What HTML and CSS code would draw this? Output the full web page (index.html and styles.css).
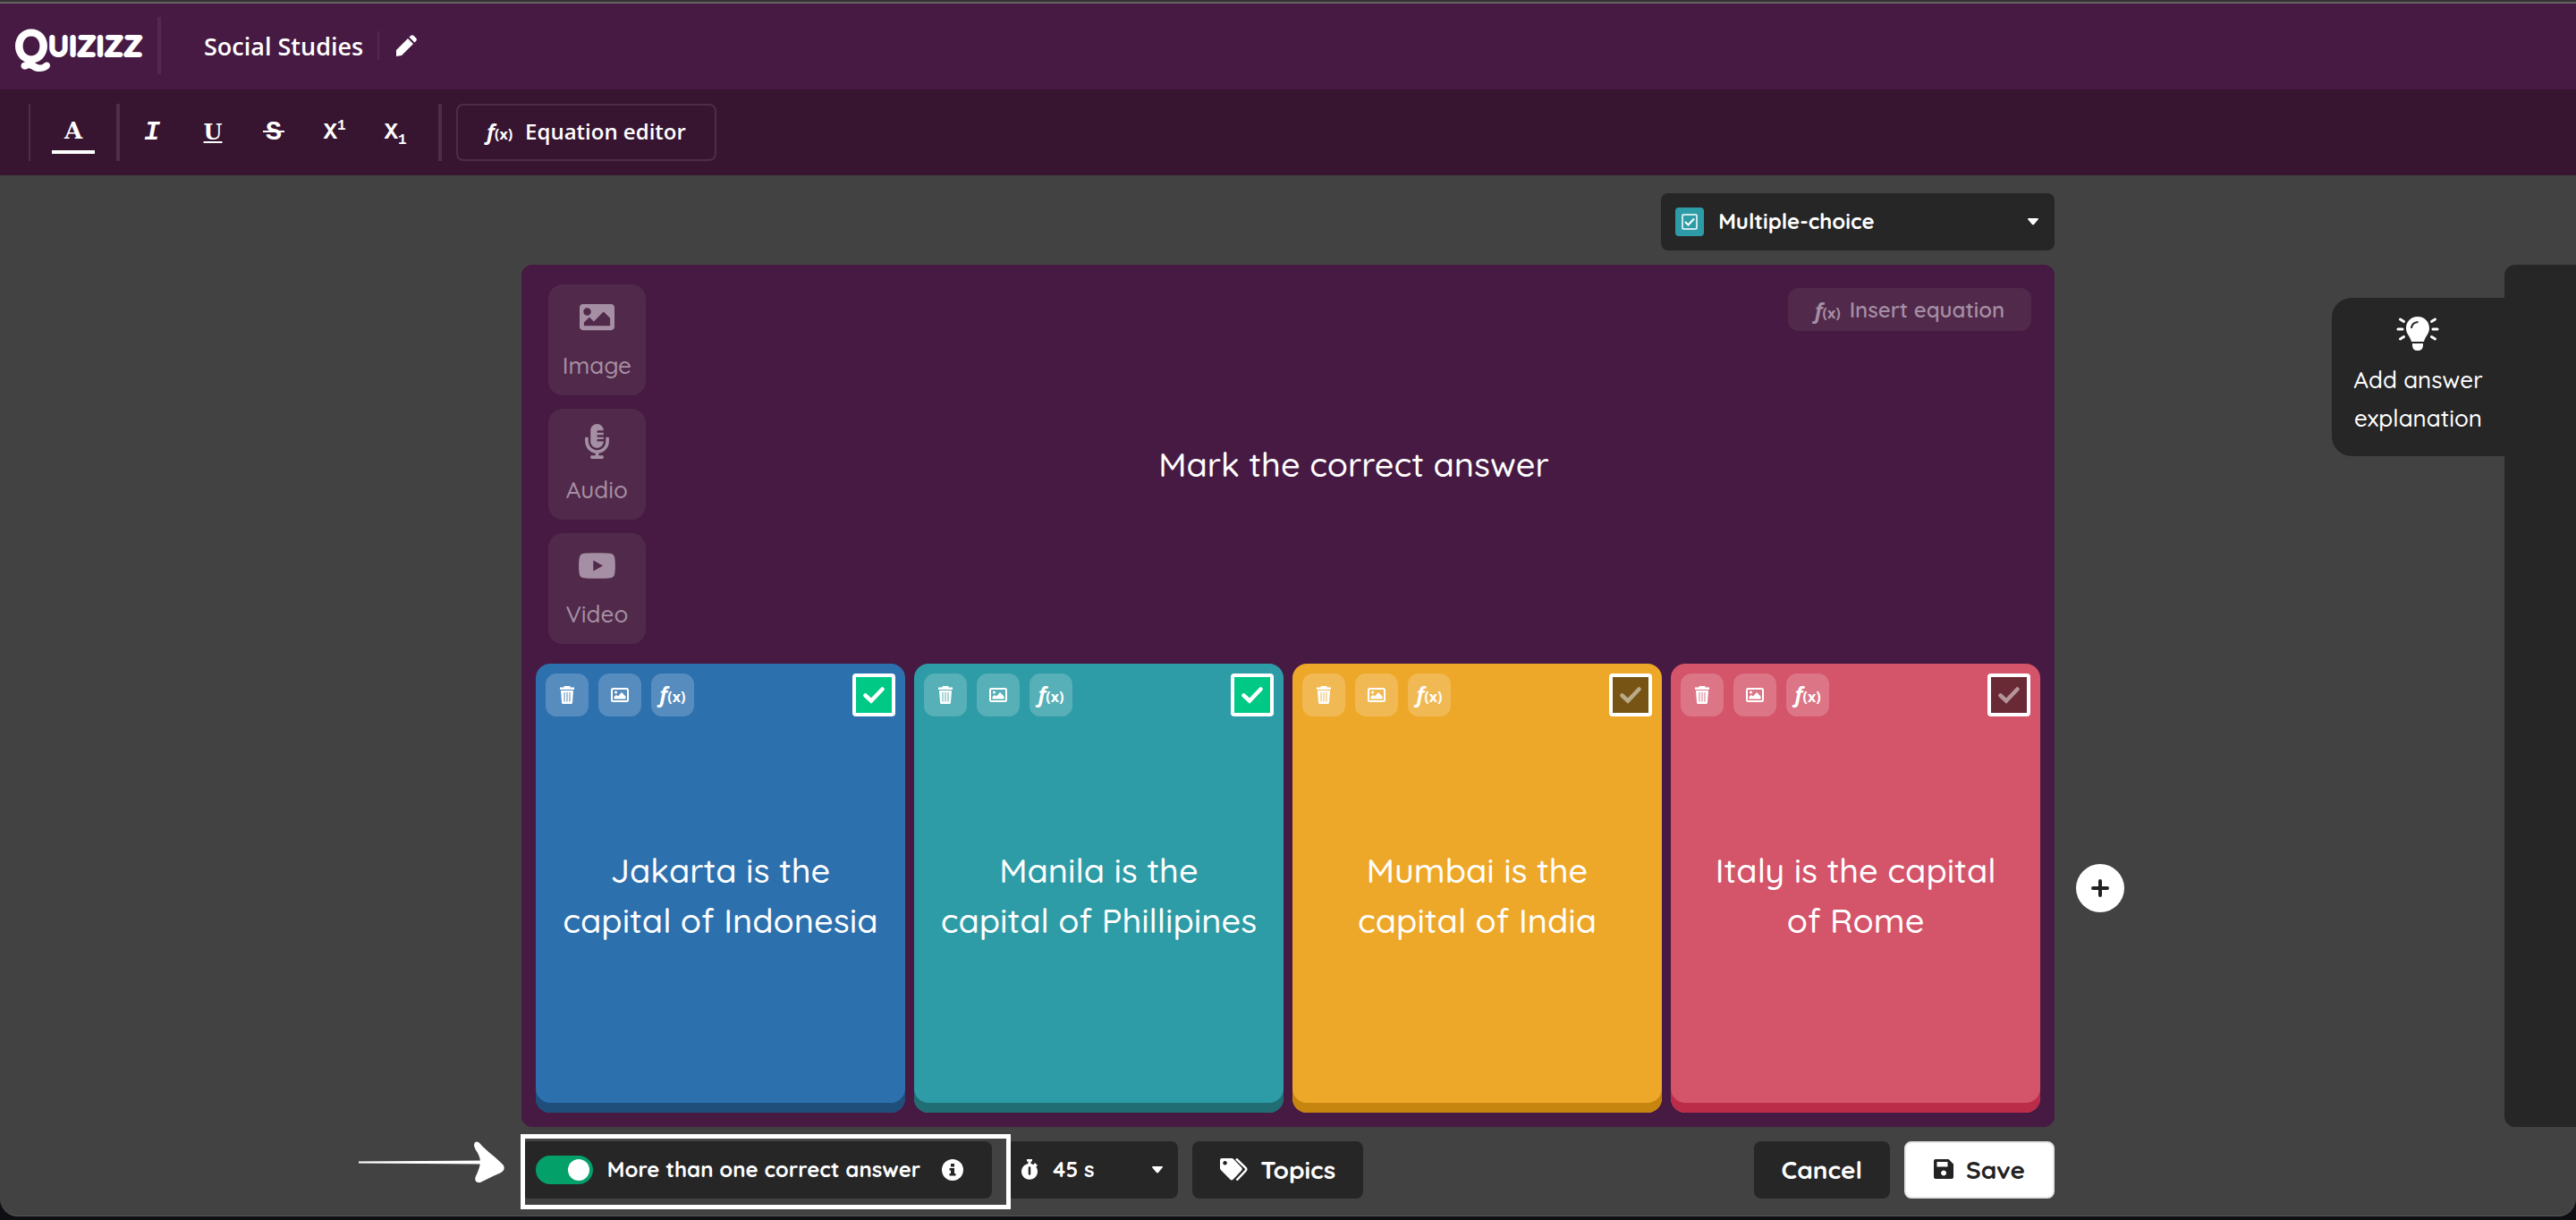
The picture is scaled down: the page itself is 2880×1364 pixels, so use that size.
FILE: index.html
```
<!DOCTYPE html>
<html lang="en">
<head>
    <meta charset="UTF-8">
    <meta name="viewport" content="width=device-width, initial-scale=1.0">
    <title>Quizizz - Question Editor</title>
    <link rel="stylesheet" href="styles.css">
</head>
<body>

    <!-- Shared icons -->
    <svg class="sprite" aria-hidden="true">
        <symbol id="trash" viewBox="0 0 16 20">
            <path fill="currentColor" d="M5 0h6l1 1.500h4v2.500H0V1.500h4zM1 5h14l-1 13.500q-.2 1.500-1.500 1.500h-9Q2.200 20 2 18.500zM4.500 7v10.500h1V7zM7.500 7v10.500h1V7zM10.500 7v10.500h1V7z" fill-rule="evenodd"/>
        </symbol>
        <symbol id="picture" viewBox="0 0 20 16">
            <rect x="1" y="1" width="18" height="14" rx="1.500" fill="none" stroke="currentColor" stroke-width="2"/>
            <circle cx="5.500" cy="5" r="1.500" fill="currentColor"/>
            <path fill="currentColor" d="M3.500 12.500V10L6 8l2 1.500 4-4.500 4.500 4.500v3z"/>
        </symbol>
        <symbol id="check" viewBox="0 0 24 20">
            <path d="M2.500 10.500L9 16.500 21.500 3.500" fill="none" stroke="currentColor" stroke-width="4.500" stroke-linecap="round"/>
        </symbol>
        <symbol id="caret" viewBox="0 0 12 8">
            <path fill="currentColor" d="M1 0h10q1.500.2.600 1.500L7 7q-1 .8-2 0L.4 1.500Q-.5.200 1 0z"/>
        </symbol>
    </svg>

    <!-- Header -->
    <header class="header">
        <a href="#" class="logo" aria-label="Quizizz"><span class="logo-q">Q</span>UIZIZZ</a>
        <span class="divider thick"></span>
        <h1 class="quiz-name">Social Studies</h1>
        <span class="divider short"></span>
        <button class="edit-name" aria-label="Edit name">
            <svg width="24" height="24" viewBox="0 0 24 24">
                <path fill="currentColor" d="M14 4l6 6L7 23l-6 1 0-7zM15.500 2.500l1.800-1.800q1.700-1.200 3.300.2l2.500 2.500q1.400 1.600.2 3.300L21.500 8.500z"/>
            </svg>
        </button>
    </header>

    <!-- Formatting toolbar -->
    <div class="toolbar">
        <span class="divider"></span>
        <button class="tool color" aria-label="Text colour">A</button>
        <span class="divider thick"></span>
        <div class="tools">
            <button class="tool italic" aria-label="Italic">I</button>
            <button class="tool underline" aria-label="Underline">U</button>
            <button class="tool strike" aria-label="Strikethrough">S</button>
            <button class="tool script" aria-label="Superscript">X<sup>1</sup></button>
            <button class="tool script" aria-label="Subscript">X<sub>1</sub></button>
        </div>
        <span class="divider thick"></span>
        <button class="equation-editor"><span class="fx">f<small>(x)</small></span>Equation editor</button>
    </div>

    <main class="workspace">
        <label class="type-picker">
            <span class="type-icon">
                <svg width="18" height="18" viewBox="0 0 18 18" fill="none" stroke="currentColor">
                    <rect x="1" y="1" width="16" height="16" rx="1" stroke-width="1.500"/>
                    <path d="M4 9l3.500 3.500L14 5.500" stroke-width="2"/>
                </svg>
            </span>
            <select aria-label="Question type"><option>Multiple-choice</option></select>
            <svg class="caret"><use href="#caret"/></svg>
        </label>

        <section class="stage">
            <div class="question">
                <div class="media">
                    <button class="media-btn">
                        <svg width="39" height="39" viewBox="0 0 512 512"><path fill="currentColor" d="M464 448H48c-26.510 0-48-21.490-48-48V112c0-26.510 21.490-48 48-48h416c26.510 0 48 21.490 48 48v288c0 26.510-21.490 48-48 48zM112 120c-30.928 0-56 25.072-56 56s25.072 56 56 56 56-25.072 56-56-25.072-56-56-56zM64 384h384V272l-87.515-87.515c-4.686-4.686-12.284-4.686-16.971 0L208 320l-55.515-55.515c-4.686-4.686-12.284-4.686-16.971 0L64 336v48z"/></svg>
                        Image
                    </button>
                    <button class="media-btn">
                        <svg width="27" height="39" viewBox="0 0 352 512"><path fill="currentColor" d="M336 192h-16c-8.840 0-16 7.160-16 16v48c0 74.800-64.490 134.820-140.790 127.380C96.710 376.890 48 317.110 48 250.300V208c0-8.840-7.160-16-16-16H16c-8.840 0-16 7.160-16 16v40.160c0 89.640 63.970 169.550 152 181.690V464H96c-8.840 0-16 7.160-16 16v16c0 8.840 7.160 16 16 16h160c8.840 0 16-7.160 16-16v-16c0-8.840-7.160-16-16-16h-56v-33.770C285.710 418.470 352 344.900 352 256v-48c0-8.840-7.160-16-16-16zM176 352c53.020 0 96-42.980 96-96h-85.330c-5.890 0-10.670-3.580-10.670-8v-16c0-4.420 4.780-8 10.670-8H272v-32h-85.330c-5.890 0-10.670-3.580-10.670-8v-16c0-4.420 4.780-8 10.670-8H272v-32h-85.330c-5.890 0-10.670-3.580-10.670-8v-16c0-4.420 4.780-8 10.670-8H272c0-53.020-42.980-96-96-96S80 42.980 80 96v160c0 53.020 42.980 96 96 96z"/></svg>
                        Audio
                    </button>
                    <button class="media-btn">
                        <svg width="43" height="39" viewBox="0 0 576 512"><path fill="currentColor" d="M549.655 124.083c-6.281-23.650-24.787-42.276-48.284-48.597C458.781 64 288 64 288 64S117.220 64 74.629 75.486c-23.497 6.322-42.003 24.947-48.284 48.597-11.412 42.867-11.412 132.305-11.412 132.305s0 89.438 11.412 132.305c6.281 23.650 24.787 41.500 48.284 47.821C117.220 448 288 448 288 448s170.780 0 213.371-11.486c23.497-6.321 42.003-24.171 48.284-47.821 11.412-42.867 11.412-132.305 11.412-132.305s0-89.438-11.412-132.305zm-317.510 213.508V175.185l142.739 81.205-142.739 81.201z"/></svg>
                        Video
                    </button>
                </div>
                <p class="question-text">Mark the correct answer</p>
                <button class="insert-equation"><span class="fx">f<small>(x)</small></span>Insert equation</button>
            </div>

            <div class="answers">
                <article class="answer blue">
                    <div class="answer-tools">
                        <button aria-label="Delete"><svg width="16" height="20"><use href="#trash"/></svg></button>
                        <button aria-label="Add image"><svg width="20" height="16"><use href="#picture"/></svg></button>
                        <button aria-label="Add equation"><span class="fx">f<small>(x)</small></span></button>
                        <label class="correct"><input type="checkbox" aria-label="Correct answer" checked><svg width="24" height="20"><use href="#check"/></svg></label>
                    </div>
                    <p>Jakarta is the<br>capital of Indonesia</p>
                </article>
                <article class="answer teal">
                    <div class="answer-tools">
                        <button aria-label="Delete"><svg width="16" height="20"><use href="#trash"/></svg></button>
                        <button aria-label="Add image"><svg width="20" height="16"><use href="#picture"/></svg></button>
                        <button aria-label="Add equation"><span class="fx">f<small>(x)</small></span></button>
                        <label class="correct"><input type="checkbox" aria-label="Correct answer" checked><svg width="24" height="20"><use href="#check"/></svg></label>
                    </div>
                    <p>Manila is the<br>capital of Phillipines</p>
                </article>
                <article class="answer yellow">
                    <div class="answer-tools">
                        <button aria-label="Delete"><svg width="16" height="20"><use href="#trash"/></svg></button>
                        <button aria-label="Add image"><svg width="20" height="16"><use href="#picture"/></svg></button>
                        <button aria-label="Add equation"><span class="fx">f<small>(x)</small></span></button>
                        <label class="correct"><input type="checkbox" aria-label="Correct answer"><svg width="24" height="20"><use href="#check"/></svg></label>
                    </div>
                    <p>Mumbai is the<br>capital of India</p>
                </article>
                <article class="answer pink">
                    <div class="answer-tools">
                        <button aria-label="Delete"><svg width="16" height="20"><use href="#trash"/></svg></button>
                        <button aria-label="Add image"><svg width="20" height="16"><use href="#picture"/></svg></button>
                        <button aria-label="Add equation"><span class="fx">f<small>(x)</small></span></button>
                        <label class="correct"><input type="checkbox" aria-label="Correct answer"><svg width="24" height="20"><use href="#check"/></svg></label>
                    </div>
                    <p>Italy is the capital<br>of Rome</p>
                </article>
            </div>
        </section>

        <aside class="side">
            <button class="add-option" aria-label="Add option">
                <svg width="20" height="20" viewBox="0 0 20 20"><path d="M10 2v16M2 10h16" stroke="currentColor" stroke-width="4" stroke-linecap="round"/></svg>
            </button>
            <button class="explain">
                <svg width="48" height="40" viewBox="0 0 48 40">
                    <path fill="currentColor" d="M24 1c8 0 13 6 13 13 0 6-4 8-6 15H17c-2-7-6-9-6-15C11 7 16 1 24 1zM18 31h12v2.500q-.5 5.500-6 5.500t-6-5.500z"/>
                    <path d="M17 14q.5-6.500 7.500-7" fill="none" stroke="#262626" stroke-width="2"/>
                    <path d="M2 15h5M41 15h5M4.500 4l4 2.500M43.500 4l-4 2.500M4.500 26l4-2.500M43.500 26l-4-2.500" stroke="currentColor" stroke-width="3" stroke-linecap="round"/>
                </svg>
                Add answer explanation
            </button>
            <div class="panel"></div>
        </aside>

        <svg class="arrow" width="164" height="48" viewBox="0 0 164 48">
            <path d="M0 22.500l140-1v4L0 24.500z" fill="#fff"/>
            <path d="M129 5c0-6 5-5 7-2 8 9 18 15 26 24 2 5-1 7-5 9-8 3-14 7-21 10-5 1-7-3-5-7 5-11 7-17 2-26q-3-4-4-8z" fill="#fff"/>
        </svg>

        <footer class="actions">
            <label class="multi">
                <input type="checkbox" class="switch" checked>
                <span>More than one correct answer</span>
                <svg width="24" height="24" viewBox="0 0 24 24">
                    <circle cx="12" cy="12" r="12" fill="currentColor"/>
                    <path fill="#262626" d="M10 5h4v3.500h-4zM8.500 10H14v6h1.500v2.500h-7V16H10v-3.500H8.500z"/>
                </svg>
            </label>
            <label class="timer">
                <svg width="20" height="24" viewBox="0 0 20 24">
                    <path fill="currentColor" d="M7 0h6v2.500h-1.500V5a9 9 0 1 1-3 0V2.500H7zM16 4l3 3-1.500 1.500L14.500 6z"/>
                    <path d="M10 9.500v7" stroke="#262626" stroke-width="2.500" stroke-linecap="round"/>
                </svg>
                <select aria-label="Time limit"><option>45 s</option></select>
                <svg class="caret"><use href="#caret"/></svg>
            </label>
            <button class="btn">
                <svg width="31" height="25" viewBox="0 0 31 25">
                    <path fill="currentColor" fill-rule="evenodd" d="M2 0h11q1.200 0 2 .8l9 9.500q1.600 1.700 0 3.400l-9.500 10q-1.500 1.500-3 0L.8 13Q0 12 0 11V2Q0 0 2 0zM5.500 3a2.300 2.300 0 1 0 .1 0z"/>
                    <path d="M18 .5l10.500 10q1.500 1.700 0 3.500L18.500 24.500" fill="none" stroke="currentColor" stroke-width="2.500"/>
                </svg>
                Topics
            </button>
            <button class="btn cancel">Cancel</button>
            <button class="btn save">
                <svg width="22" height="22" viewBox="0 0 22 22">
                    <path fill="currentColor" fill-rule="evenodd" d="M2 0h14.500L22 5.500V20q0 2-2 2H2q-2 0-2-2V2Q0 0 2 0zM3.500 3v5.500h12V3zM11 12.500a3 3 0 1 0 .1 0z"/>
                </svg>
                Save
            </button>
        </footer>
    </main>

</body>
</html>
```
FILE: styles.css
```
* {
    box-sizing: border-box;
}

body {
    margin: 0;
    min-height: 100vh;
    display: flex;
    flex-direction: column;
    background: #0d0f13;
    border-top: 2px solid #333333;
    font-family: Quicksand, Lato, sans-serif;
    font-size: 26px;
    font-weight: 500;
    color: #fff;
}

button,
select {
    font: inherit;
    color: inherit;
    background: none;
    border: none;
    padding: 0;
    cursor: pointer;
}

p,
h1 {
    margin: 0;
}

.sprite {
    display: none;
}

/* Header */
.header {
    display: flex;
    align-items: center;
    height: 98px;
    padding: 0 16px 2px;
    border-top: 2px solid #636363;
    background: #471a43;
    font-family: "Open Sans", sans-serif;
}

.logo {
    display: flex;
    align-items: center;
    width: 144px;
    font-family: Quicksand, Lato, sans-serif;
    font-size: 33px;
    font-weight: 700;
    line-height: 64px;
    color: #fff;
    text-decoration: none;
    -webkit-text-stroke: 2px #fff;
}

.logo-q {
    font-size: 50px;
}

.divider {
    width: 2px;
    height: 64px;
    background: #502b4b;
}

.divider.thick {
    width: 4px;
}

.divider.short {
    height: 32px;
    margin: 0 18px 0 16px;
}

.header .thick {
    margin: 0 48px 0 16px;
}

.quiz-name {
    font-size: 27px;
    font-weight: 600;
}

.edit-name {
    display: flex;
}

/* Formatting toolbar */
.toolbar {
    display: flex;
    align-items: center;
    height: 96px;
    padding-left: 32px;
    background: #371430;
    font-family: "Open Sans", sans-serif;
    font-size: 24px;
    font-weight: 600;
}

.tool {
    position: relative;
    width: 48px;
    height: 48px;
    font-family: "Liberation Mono", monospace;
    font-weight: 700;
    font-size: 30px;
    line-height: 44px;
}

.tool.color {
    margin: 0 24px;
    border-bottom: 4px solid #fff;
    font-family: "DejaVu Serif", serif;
    font-size: 26px;
}

.tools {
    display: flex;
    gap: 20px;
    margin: 0 24px 0 12px;
}

.tool.italic {
    font-style: italic;
}

.tool.underline {
    font-family: "DejaVu Serif", serif;
    font-size: 24px;
    text-decoration: underline;
}

.strike::after {
    content: "";
    position: absolute;
    top: 22px;
    left: 12px;
    width: 24px;
    height: 2px;
    background: #fff;
}

.tool.script {
    font-size: 26px;
}

.script sup,
.script sub {
    font-size: 16px;
    line-height: 16px;
}

.equation-editor {
    display: flex;
    align-items: center;
    gap: 14px;
    height: 64px;
    margin-left: 16px;
    padding: 0 32px 4px;
    border: 2px solid #502b4b;
    border-radius: 8px;
}

.fx {
    font-family: "Open Sans", sans-serif;
    font-size: 24px;
    font-weight: 700;
    font-style: italic;
}

.fx small {
    font-size: 16px;
    font-style: normal;
}

/* Workspace */
.workspace {
    flex: 1;
    display: grid;
    grid-template-columns: 17fr 50fr 17fr;
    grid-template-rows: 64px 1fr 64px;
    gap: 16px 0;
    margin-bottom: 4px;
    padding: 20px 0 19px;
    background: #424242;
    border-bottom: 1px solid #555555;
    border-radius: 0 0 20px 20px;
}

.type-picker,
.timer,
.multi {
    display: flex;
    align-items: center;
    background: #262626;
    border-radius: 8px;
    font-size: 24px;
    font-weight: 700;
}

.type-picker select,
.timer select {
    flex: 1;
    padding-bottom: 2px;
    appearance: none;
}

.caret {
    width: 12px;
    height: 8px;
}

.type-picker {
    grid-column: 2;
    justify-self: end;
    width: 440px;
    padding: 0 18px 0 16px;
    gap: 16px;
}

.type-icon {
    display: flex;
    align-items: center;
    justify-content: center;
    width: 32px;
    height: 32px;
    background: #2e9ca6;
    border-radius: 4px;
}

/* Question */
.stage {
    grid-column: 2;
    display: flex;
    flex-direction: column;
    padding: 0 16px 16px;
    background: #471a43;
    border-radius: 12px;
}

.question {
    position: relative;
    display: flex;
    align-items: center;
    padding: 22px 0 22px 14px;
}

.media {
    display: flex;
    flex-direction: column;
    gap: 15px;
}

.media-btn {
    display: flex;
    flex-direction: column;
    align-items: center;
    gap: 19px;
    width: 109px;
    height: 124px;
    padding-top: 17px;
    background: #51294a;
    border-radius: 16px;
    color: #a58fa4;
    line-height: 32px;
}

.question-text {
    flex: 1;
    padding-left: 24px;
    text-align: center;
    font-size: 38px;
}

.insert-equation {
    position: absolute;
    top: 26px;
    right: 10px;
    display: flex;
    align-items: center;
    gap: 10px;
    height: 48px;
    padding: 0 30px;
    background: #51294a;
    border-radius: 12px;
    color: #a58fa4;
    font-size: 24px;
    font-weight: 600;
}

/* Answers */
.answers {
    flex: 1;
    display: grid;
    grid-template-columns: repeat(4, 1fr);
    gap: 10px;
}

.answer {
    display: flex;
    flex-direction: column;
    padding: 11px;
    border-radius: 16px;
}

.blue {
    background: #2d70ae;
    box-shadow: inset 0 -11px #204e7b;
}

.teal {
    background: #2e9ca6;
    box-shadow: inset 0 -11px #216d74;
}

.yellow {
    background: #eea829;
    box-shadow: inset 0 -11px #c6850f;
}

.pink {
    background: #d4546a;
    box-shadow: inset 0 -11px #bb2c48;
}

.answer p {
    flex: 1;
    align-content: center;
    padding: 0 16px 32px;
    text-align: center;
    font-size: 38px;
    line-height: 56px;
}

.answer-tools {
    display: flex;
    gap: 11px;
}

.answer-tools button {
    display: flex;
    align-items: center;
    justify-content: center;
    width: 48px;
    height: 48px;
    background: rgba(255, 255, 255, 0.2);
    border-radius: 12px;
}

.answer-tools .fx {
    padding-bottom: 4px;
}

.correct {
    display: grid;
    place-items: center;
    margin-left: auto;
    color: rgba(255, 255, 255, 0.5);
}

.correct input,
.correct svg {
    grid-area: 1 / 1;
}

.correct input {
    appearance: none;
    width: 48px;
    height: 48px;
    margin: 0;
    border: 4px solid #fff;
    border-radius: 4px;
    background: rgba(0, 0, 0, 0.5);
}

.correct input:checked {
    background: #00c985;
}

.correct input:checked + svg {
    color: #fff;
}

/* Right side */
.side {
    display: flex;
    align-items: flex-start;
}

.add-option {
    display: flex;
    align-items: center;
    justify-content: center;
    width: 54px;
    height: 54px;
    margin: 670px auto 0 24px;
    background: #fff;
    border-radius: 50%;
    color: #222222;
}

.explain {
    display: flex;
    flex-direction: column;
    align-items: center;
    gap: 10px;
    width: 193px;
    height: 177px;
    margin-top: 37px;
    padding: 20px 20px 0;
    background: #262626;
    border-radius: 22px 0 0 22px;
    line-height: 43px;
}

.panel {
    align-self: stretch;
    width: 80px;
    background: #262626;
    border-radius: 12px 0 0 12px;
}

/* Bottom actions */
.arrow {
    justify-self: end;
    margin-right: 18px;
}

.actions {
    display: flex;
    gap: 16px;
}

.multi {
    position: relative;
    gap: 16px;
    padding: 0 32px 0 16px;
}

.multi span {
    margin-right: 8px;
    padding-bottom: 2px;
}

/* Highlight frame */
.multi::after {
    content: "";
    position: absolute;
    inset: -8px -21px -12px -1px;
    border: 5px solid #fff;
}

.switch {
    appearance: none;
    display: flex;
    justify-content: flex-end;
    width: 64px;
    height: 32px;
    margin: 0;
    padding: 4px;
    background: #04a06a;
    border-radius: 16px;
}

.switch::before {
    content: "";
    width: 24px;
    height: 24px;
    background: #fff;
    border-radius: 50%;
}

.timer {
    gap: 16px;
    width: 192px;
    padding: 0 17px 0 16px;
}

.btn {
    display: flex;
    align-items: center;
    gap: 14px;
    padding: 0 31px 2px;
    background: #262626;
    border-radius: 8px;
    font-size: 28px;
    font-weight: 700;
}

.cancel {
    margin-left: auto;
}

.save {
    background: #fff;
    border: 2px solid #e5e5e5;
    color: #222222;
}
```
